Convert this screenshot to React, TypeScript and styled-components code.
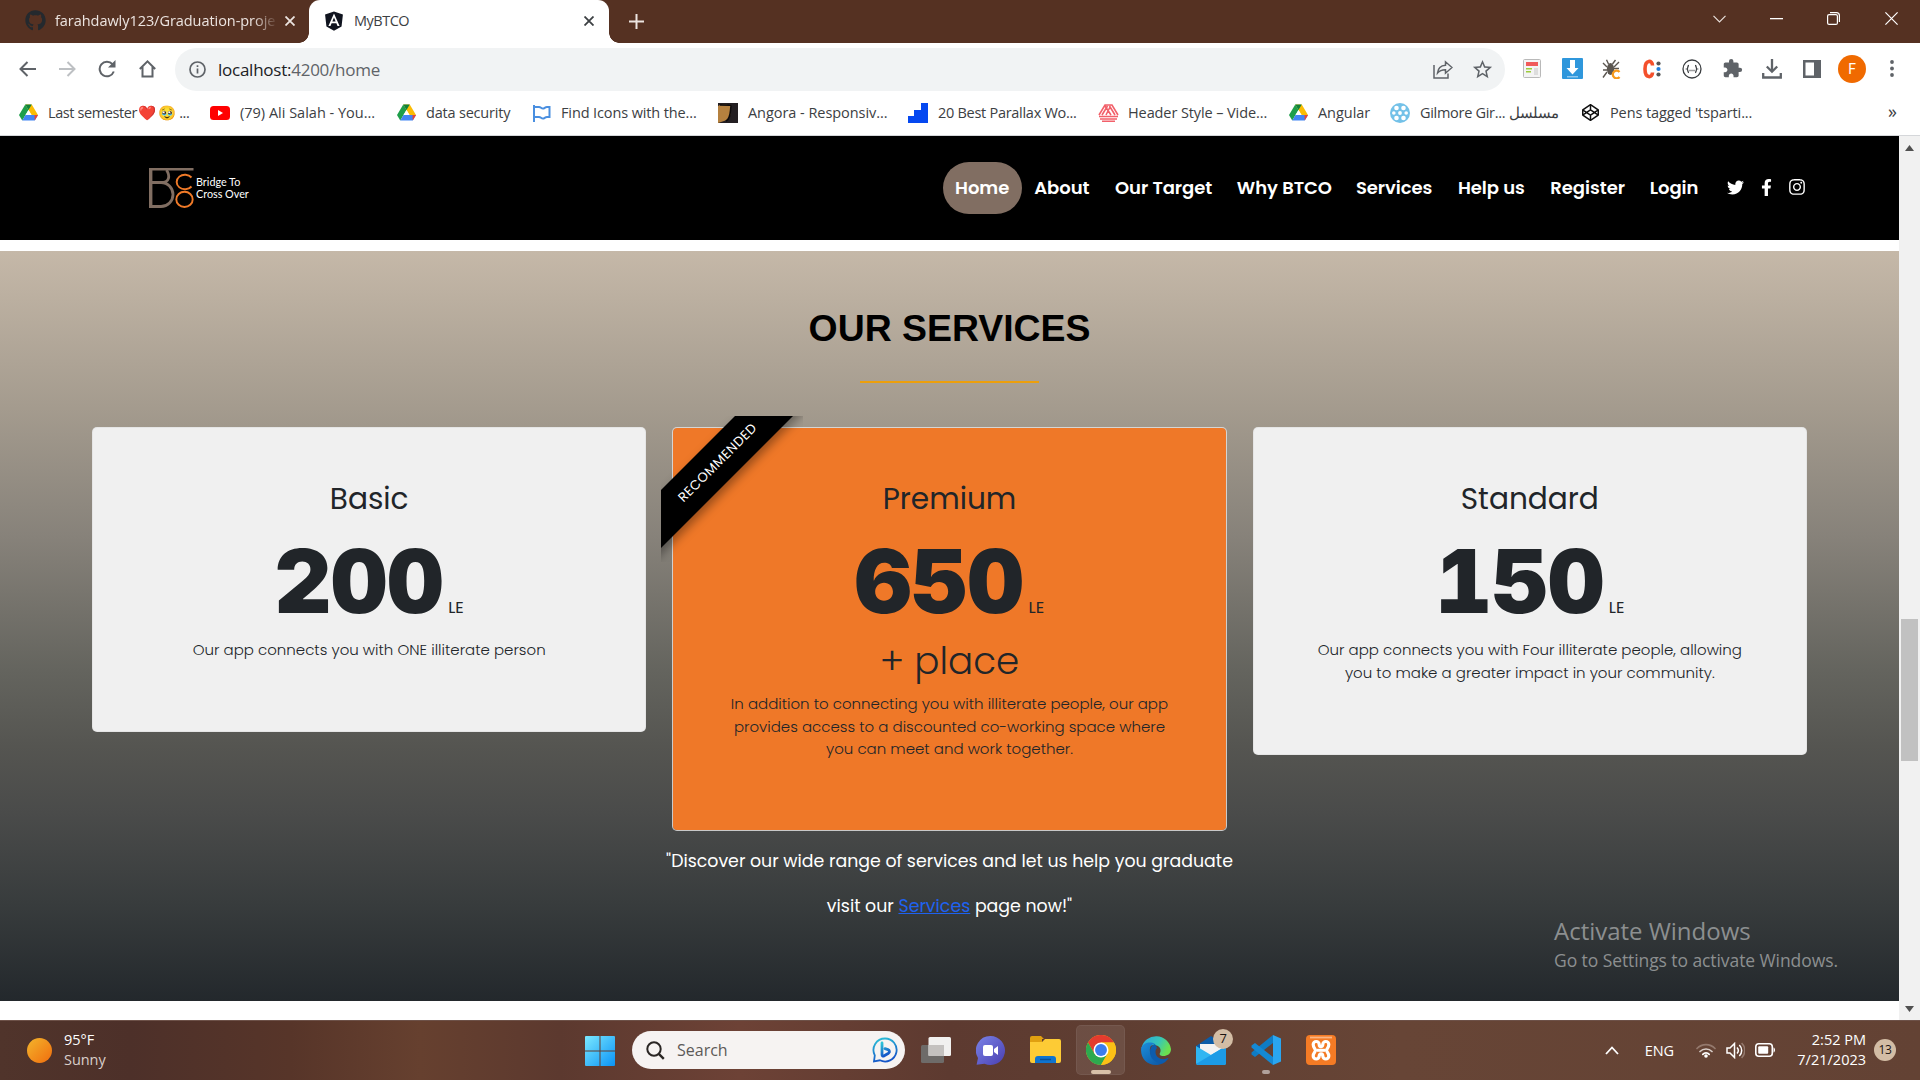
import React from 'react';
import styled, { createGlobalStyle, css } from 'styled-components';
import { FaGithub, FaAngular, FaTwitter, FaFacebookF, FaInstagram, FaCodepen } from 'react-icons/fa';
import { MdExtension, MdStarBorder } from 'react-icons/md';

const GlobalStyle = createGlobalStyle`
  *, *::before, *::after { box-sizing: border-box; }
  body { margin: 0; background: #fff; overflow: hidden; }
  svg { display: block; flex: none; }
`;

const uiFont = '"Segoe UI", "Open Sans", "Noto Sans", sans-serif';
const siteFont = 'Poppins, Inter, sans-serif';

const Screen = styled.div`
  width: 1920px;
  height: 1080px;
  display: flex;
  flex-direction: column;
  font-family: ${uiFont};
`;

/* ---------- Browser chrome ---------- */

const TabStrip = styled.header`
  height: 43px;
  display: flex;
  background: #553122;
`;

const cornerFlare = css`
  content: '';
  position: absolute;
  bottom: 0;
  width: 10px;
  height: 10px;
`;

const Tab = styled.div<{ $active?: boolean }>`
  position: relative;
  width: ${p => (p.$active ? 300 : 309)}px;
  padding: 0 ${p => (p.$active ? 15 : 14)}px 2px ${p => (p.$active ? 14 : 25)}px;
  display: flex;
  align-items: center;
  border-radius: 11px 11px 0 0;
  background: ${p => (p.$active ? '#fff' : 'transparent')};
  color: ${p => (p.$active ? '#3c4043' : '#ece4e0')};
  ${p =>
    p.$active &&
    css`
      &::before {
        ${cornerFlare}
        left: -10px;
        background: radial-gradient(circle at 0 0, transparent 9.5px, #fff 10px);
      }
      &::after {
        ${cornerFlare}
        right: -10px;
        background: radial-gradient(circle at 100% 0, transparent 9.5px, #fff 10px);
      }
    `}
`;

const TabTitle = styled.span<{ $fade?: boolean; $ls?: number }>`
  flex: 1;
  margin-left: 9px;
  font-size: 14.5px;
  line-height: 20px;
  white-space: nowrap;
  letter-spacing: ${p => p.$ls ?? 0}px;
  ${p => p.$fade && 'mask-image: linear-gradient(90deg, #000 86%, transparent 97%);'}
`;

const NewTab = styled.div`
  width: 54px;
  padding-bottom: 1px;
  display: flex;
  align-items: center;
  justify-content: center;
`;

const WindowControls = styled.div`
  margin-left: auto;
  height: 37px;
  display: flex;
  align-items: center;
`;

const WindowButton = styled.div<{ $w?: number }>`
  width: ${p => p.$w ?? 57}px;
  display: flex;
  justify-content: center;
`;

const Toolbar = styled.div`
  height: 53px;
  padding: 0 8px 0 7px;
  display: flex;
  align-items: center;
  background: #fff;
`;

const NavButton = styled.div`
  width: 40px;
  padding-bottom: 1px;
  display: flex;
  justify-content: center;
`;

const AddressBar = styled.div`
  flex: 1;
  height: 43px;
  margin: 0 7px 0 8px;
  padding: 0 11px 0 14px;
  display: flex;
  align-items: center;
  border-radius: 22px;
  background: #f1f3f4;
`;

const Url = styled.span`
  flex: 1;
  margin-left: 12px;
  font-size: 17px;
  line-height: 24px;
  letter-spacing: -0.25px;
  color: #5f6368;
  b { font-weight: 400; color: #202124; }
`;

const AddressActions = styled.div`
  display: flex;
  gap: 18px;
`;

const ExtensionButton = styled.div`
  width: 40px;
  padding-bottom: 2px;
  display: flex;
  justify-content: center;
`;

const Avatar = styled.div`
  width: 28px;
  height: 28px;
  border-radius: 50%;
  background: #f06a00;
  color: #fff;
  font: 14px/28px Roboto, sans-serif;
  text-align: center;
`;

const BookmarksBar = styled.nav`
  height: 40px;
  padding: 0 23px 6px 18px;
  display: flex;
  align-items: center;
  background: #fff;
  border-bottom: 1px solid #d5d7da;
`;

const Bookmark = styled.div<{ $w: number; $ls: number }>`
  width: ${p => p.$w}px;
  display: flex;
  align-items: center;
  gap: 10px;
  font-size: 14.5px;
  line-height: 20px;
  letter-spacing: ${p => p.$ls}px;
  white-space: nowrap;
  color: #3c4043;
`;

const BookmarkIcon = styled.span`
  width: 20px;
  display: flex;
  justify-content: center;
`;

const Emoji = styled.span`
  margin-left: 1px;
  font-size: 14.5px;
  line-height: 0;
  letter-spacing: 2.5px;
  font-family: "Noto Color Emoji", sans-serif;
`;

const Overflow = styled.span`
  margin-left: auto;
  padding-bottom: 3px;
  font-size: 18px;
  color: #3c4043;
`;

/* ---------- Page ---------- */

const Viewport = styled.div`
  height: 884px;
  display: flex;
  background: #fff;
`;

const Page = styled.main`
  position: relative;
  width: 1899px;
  font-family: ${siteFont};
`;

const SiteHeader = styled.header`
  height: 104px;
  padding: 0 93px 0 149px;
  display: flex;
  align-items: center;
  background: #000;
`;

const Brand = styled.div`
  display: flex;
  align-items: center;
  gap: 2px;
  padding-bottom: 1px;
  font: 10.8px/11.5px Lato, sans-serif;
  color: #fff;
`;

const Menu = styled.nav`
  margin-left: auto;
  display: flex;
`;

const MenuLink = styled.a<{ $w: number; $active?: boolean }>`
  width: ${p => p.$w}px;
  height: 52px;
  padding: 0 1px 1px 0;
  display: flex;
  align-items: center;
  justify-content: center;
  border-radius: 26px;
  background: ${p => (p.$active ? '#816e62' : 'transparent')};
  color: #fff;
  font-size: 18px;
  font-weight: 600;
  letter-spacing: -0.05px;
  white-space: nowrap;
`;

const Socials = styled.div`
  margin-left: 15px;
  display: flex;
  gap: 12.7px;
  color: #fff;
`;

const SocialIcon = styled.span`
  width: 18px;
  padding-bottom: 2px;
  display: flex;
  align-items: center;
  justify-content: center;
`;

const Services = styled.section`
  height: 750px;
  margin-top: 11px;
  padding: 55px 92px 0;
  display: flex;
  flex-direction: column;
  align-items: center;
  background: linear-gradient(
    180deg,
    #c5b8a8 0%, #a49b8e 21%, #87827a 38%, #64645e 56%,
    #555551 66%, #4a4b4a 75%, #383c3d 87%, #23282c 100%
  );
`;

const SectionTitle = styled.h2`
  margin: 0;
  font: 700 37.4px/44px Arial, "Liberation Sans", sans-serif;
  color: #000;
`;

const Rule = styled.div`
  width: 179px;
  height: 2px;
  margin: 31px 0 44px;
  background: #ec9f0c;
`;

const Plans = styled.div`
  width: 100%;
  display: grid;
  grid-template-columns: repeat(3, 1fr);
  align-items: start;
  gap: 26px;
`;

const Card = styled.article<{ $featured?: boolean }>`
  position: relative;
  padding: 51px 30px 69.5px;
  border: 1px solid rgba(223, 223, 223, ${p => (p.$featured ? 0.85 : 0.7)});
  border-radius: 5px;
  background: ${p => (p.$featured ? '#ef7828' : '#f0f0f0')};
  background-clip: ${p => (p.$featured ? 'padding-box' : 'border-box')};
  color: #212529;
  text-align: center;
`;

const PlanName = styled.h3`
  margin: 0 0 18px;
  font-size: 29.6px;
  font-weight: 400;
  line-height: 40px;
`;

const PriceRow = styled.div`
  height: 88px;
  display: flex;
  align-items: baseline;
  justify-content: center;
  gap: 5px;
`;

const Price = styled.strong`
  font-family: "Arial Black", Inter, sans-serif;
  font-size: 88px;
  font-weight: 860;
  line-height: 88px;
  letter-spacing: -0.5px;
  font-feature-settings: "tnum";
`;

const Currency = styled.span`
  font-size: 16.5px;
  line-height: 24px;
`;

const Extra = styled.div`
  margin: 12px 0 -6px;
  font-size: 37.3px;
  font-weight: 300;
  line-height: 48px;
`;

const Description = styled.p`
  margin: 14px 0 0;
  font-size: 15px;
  font-weight: 300;
  line-height: 22.5px;
  white-space: nowrap;
`;

const RibbonClip = styled.div`
  position: absolute;
  top: -12px;
  left: -12px;
  width: 142px;
  height: 146px;
  overflow: hidden;
`;

const Ribbon = styled.span`
  position: absolute;
  top: 26px;
  left: -56px;
  width: 225px;
  height: 41px;
  transform: rotate(-45deg);
  background: #000;
  box-shadow: 0 5px 10px rgba(0, 0, 0, 0.35);
  color: #fff;
  font-size: 13.2px;
  line-height: 41px;
  letter-spacing: 0.5px;
`;

const Tagline = styled.p`
  position: relative;
  z-index: 1;
  margin: 8px 0 0;
  text-align: center;
  color: #fff;
  font-size: 17.37px;
  line-height: 44.5px;
  a { color: #1f62f0; text-decoration: underline; text-decoration-thickness: 1px; }
`;

const Watermark = styled.div`
  position: absolute;
  left: 1554px;
  top: 778px;
  font-family: ${uiFont};
  font-size: 17.5px;
  line-height: 24px;
  letter-spacing: -0.08px;
  color: #8c8f90;
`;

const WatermarkTitle = styled.div`
  font-size: 24px;
  line-height: 34px;
  letter-spacing: -0.02px;
`;

const Scrollbar = styled.div`
  width: 21px;
  padding: 9px 0 8px;
  display: flex;
  flex-direction: column;
  align-items: center;
  background: #f1f1f1;
`;

const Thumb = styled.div`
  width: 17px;
  height: 142px;
  margin: 468px 0 auto;
  background: #c1c1c1;
`;

/* ---------- Taskbar ---------- */

const Taskbar = styled.footer`
  position: relative;
  height: 60px;
  display: flex;
  align-items: center;
  border-top: 1px solid #6d5148;
  background: linear-gradient(
    90deg,
    #50342b 0, #4d3029 130px, #573529 290px, #66402f 420px, #5c392f 560px,
    #6d4236 740px, #5d3a30 950px, #5f3e32 1120px, #674536 1400px, #634234 1920px
  );
`;

const Weather = styled.div`
  width: 585px;
  padding: 0 0 1px 27px;
  display: flex;
  align-items: center;
  gap: 12px;
  font-size: 14.5px;
  line-height: 20px;
  letter-spacing: -0.05px;
  color: #fff;
  span { color: #d9cfca; }
`;

const Sun = styled.div`
  width: 25px;
  height: 25px;
  border-radius: 50%;
  background: linear-gradient(135deg, #f3b52c, #f06d0e);
`;

const SearchBox = styled.div`
  width: 273px;
  height: 38px;
  margin: 0 6px 1px 17px;
  padding: 0 7px 0 14px;
  display: flex;
  align-items: center;
  border-radius: 19px;
  background: #f6f3f2;
  color: #5d5a58;
  font-size: 16px;
  span { flex: 1; margin-left: 12px; }
`;

const AppSlot = styled.div<{ $active?: boolean }>`
  position: relative;
  width: 49px;
  height: 50px;
  margin: 0 6px 1px 0;
  display: flex;
  align-items: center;
  justify-content: center;
  border-radius: 5px;
  ${p => p.$active && 'background: rgba(255,255,255,.09); box-shadow: inset 0 0 0 1px rgba(255,255,255,.06);'}
`;

const RunMark = styled.i<{ $wide?: boolean }>`
  position: absolute;
  bottom: 1px;
  left: 50%;
  width: ${p => (p.$wide ? 20 : 8)}px;
  height: 4px;
  margin-left: ${p => (p.$wide ? -10 : -4)}px;
  border-radius: 2px;
  background: ${p => (p.$wide ? '#d8c0a8' : '#b1a19b')};
`;

const CountBadge = styled.span<{ $over?: boolean }>`
  width: ${p => (p.$over ? 20 : 22)}px;
  height: ${p => (p.$over ? 20 : 22)}px;
  border-radius: 50%;
  background: #d3bda5;
  color: #1c1512;
  font-size: ${p => (p.$over ? 13 : 12)}px;
  line-height: ${p => (p.$over ? 19 : 21)}px;
  letter-spacing: -0.3px;
  text-align: center;
  ${p => p.$over && 'position: absolute; top: 4px; right: 2px;'}
`;

const Tray = styled.div`
  margin-left: auto;
  padding: 0 24px 1px 0;
  display: flex;
  align-items: center;
  color: #fff;
`;

const Language = styled.span`
  margin: 0 22px 0 26px;
  font-size: 14.5px;
  letter-spacing: -0.1px;
`;

const Status = styled.div`
  display: flex;
  align-items: center;
  gap: 10px;
`;

const Clock = styled.div`
  width: 90px;
  margin-right: 8px;
  padding-bottom: 1px;
  font-size: 14.5px;
  line-height: 20px;
  text-align: right;
`;

/* ---------- Drawings ---------- */

const Drive = () => (
  <svg width="19" height="17" viewBox="0 0 38 34">
    <path d="M12.5 1h13L38 22H25z" fill="#fbbc04" />
    <path d="M12.500 1 0 22l6.500 11L19 12z" fill="#1e9e4a" />
    <path d="M13 22h25l-6.500 11H6.500z" fill="#4285f4" />
    <path d="M12.500 1h13L19 12z" fill="#128039" />
    <path d="M31 22h7l-6.500 11z" fill="#ea4335" />
    <path d="M19 12 13 22h12z" fill="#fff" />
  </svg>
);
const YouTube = () => (
  <svg width="20" height="14" viewBox="0 0 20 14"><rect width="20" height="14" rx="3.500" fill="#f00" /><path d="M8 4v6l5-3z" fill="#fff" /></svg>
);
const Flag = () => (
  <svg width="19" height="18" viewBox="0 0 19 18" fill="none" stroke="#4a8fe0" strokeWidth="2">
    <path d="M2 18V1M2 3h5c2 0 2 1.500 4 1.500 1.500 0 2-1.500 4-1.500h2.500v10H15c-2 0-2.500 1.500-4 1.500-2 0-2-1.500-4-1.500H2" />
  </svg>
);
const Angora = () => (
  <svg width="20" height="20" viewBox="0 0 20 20"><path fill="#231f22" d="M0 0h20v20H0z" /><path d="M0 3c5-2 10-1 13 0 0 4 0 7-1 10-1 4-4 4-6 5l-6 2z" fill="#b5813f" /><path d="M2 2c8 0 11 0 11 1-1 6 0 12-5 15" fill="none" stroke="#0c0a0b" strokeWidth="1.500" /></svg>
);
const Stairs = () => (
  <svg width="20" height="20" viewBox="0 0 20 20"><path d="M13 0h7v20H0v-7h6V7h7z" fill="#0548f0" /></svg>
);
const TriangleMark = () => (
  <svg width="21" height="18" viewBox="0 0 21 18" fill="none" stroke="#f2606a" strokeWidth="1.600">
    <path d="M1 11 7 1h7l6 10M4 11l5.500-9M8 11l4-8M7 2l6 9M11.500 2l5.500 9M1 12.500h19M2 15h17M4 17.200h13" />
  </svg>
);
const Reel = () => (
  <svg width="20" height="20" viewBox="0 0 20 20"><circle cx="10" cy="10" r="10" fill="#73c1e8" /><g fill="#fff"><circle cx="6.500" cy="5" r="2.300" /><circle cx="13.500" cy="5" r="2.300" /><circle cx="6.500" cy="15" r="2.300" /><circle cx="13.500" cy="15" r="2.300" /><circle cx="3.800" cy="10" r="1.800" /><circle cx="16.200" cy="10" r="1.800" /><circle cx="10" cy="10" r="1.900" /></g></svg>
);
const Close = ({ c }: { c: string }) => (
  <svg width="10" height="10" viewBox="0 0 10 10" stroke={c} strokeWidth="1.800"><path d="M.5.5l9 9M9.500.5l-9 9" /></svg>
);
const Arrow = ({ c, flip }: { c: string; flip?: boolean }) => (
  <svg width="17" height="16" viewBox="0 0 17 16" fill="none" stroke={c} strokeWidth="2">
    <path d={flip ? 'M0 8h15M8.500 1l7 7-7 7' : 'M17 8H2M8.500 1l-7 7 7 7'} />
  </svg>
);

const bookmarks: { icon: React.ReactNode; text: React.ReactNode; w: number; ls: number }[] = [
  { icon: <Drive />, text: <>Last semester<Emoji>❤️🥹</Emoji>...</>, w: 192, ls: -0.4 },
  { icon: <YouTube />, text: '(79) Ali Salah - You...', w: 186, ls: 0 },
  { icon: <Drive />, text: 'data security', w: 135, ls: -0.2 },
  { icon: <Flag />, text: 'Find Icons with the...', w: 187, ls: -0.12 },
  { icon: <Angora />, text: 'Angora - Responsiv...', w: 190, ls: -0.05 },
  { icon: <Stairs />, text: '20 Best Parallax Wo...', w: 190, ls: -0.28 },
  { icon: <TriangleMark />, text: 'Header Style – Vide...', w: 190, ls: -0.1 },
  { icon: <Drive />, text: 'Angular', w: 102, ls: -0.05 },
  { icon: <Reel />, text: <>Gilmore Gir... مسلسل</>, w: 190, ls: -0.3 },
  { icon: <FaCodepen size={17} color="#111" />, text: "Pens tagged 'tsparti...", w: 180, ls: -0.1 },
];

const extensions: React.ReactNode[] = [
  <svg width="18" height="19" viewBox="0 0 18 19"><rect x=".5" y=".5" width="17" height="18" rx="1" fill="#f4f4f4" stroke="#b9b9b9" /><path fill="#f05a5a" d="M3 3h12v4H3z" /><path fill="#9ccc3c" d="M3 9h6v1.600H3zM3 12h5v1.600H3z" /><path fill="#ddd" d="M11 9h4v7h-4z" /></svg>,
  <svg width="21" height="21" viewBox="0 0 21 21"><rect width="21" height="21" rx="1" fill="#2f97dc" /><path fill="#fff" d="M8 2h5v8h3.500l-6 6.500-6-6.500H8z" /><path fill="#8fc9f0" d="M5 18h11v1.500H5z" /></svg>,
  <svg width="20" height="20" viewBox="0 0 20 20" fill="none"><ellipse cx="8.500" cy="10" rx="3.600" ry="6" fill="#5b5650" /><path d="M6.500 5 4.500.8M10.500 5l3-4M5 8 1 4M12 8l5-5M5 11H1M5 13l-4 5.500M12 9.500h5" stroke="#5b5650" strokeWidth="1.400" /><path d="M17.500 13a3.800 3.800 0 1 0 0 5" stroke="#f79a1c" strokeWidth="2.300" /></svg>,
  <svg width="18" height="20" viewBox="0 0 18 20" fill="none"><path d="M9.500 6.500C9.500 1 2 0 2 10s7.500 9 7.500 3.500" stroke="#f4502c" strokeWidth="3.600" /><circle cx="15.500" cy="4.500" r="2.100" fill="#555" /><circle cx="15.500" cy="10" r="2.100" fill="#1f7fe0" /><circle cx="15.500" cy="15.500" r="2.100" fill="#555" /></svg>,
  <svg width="20" height="20" viewBox="0 0 20 20" fill="none" stroke="#3a3d40" strokeWidth="1.300"><circle cx="10" cy="10" r="9" /><path d="M7 6.500c-2 0-.5 3-2 3.500 1.500.5 0 3.500 2 3.500M13 6.500c2 0 .5 3 2 3.500-1.500.5 0 3.500-2 3.500" /><path d="M7.500 11.500h5" strokeDasharray="1 1" /></svg>,
  <MdExtension size={21} color="#5f6368" />,
  <svg width="20" height="20" viewBox="0 0 20 20" fill="none" stroke="#5f6368" strokeWidth="2.300"><path d="M10 0v12M4.800 7.500 10 12.700l5.200-5.200M1.200 14v4.500h17.600V14" /></svg>,
  <svg width="18" height="18" viewBox="0 0 18 18"><path fill="#5f6368" fillRule="evenodd" d="M0 0h18v18H0zM2.500 2.500v13h8.500v-13z" /></svg>,
];

const Chat = () => (
  <svg width="29" height="29" viewBox="0 0 29 29"><defs><linearGradient id="ch" x1="0" y1="0" x2="1" y2="1"><stop stopColor="#7a83e8" /><stop offset="1" stopColor="#4a3fb0" /></linearGradient></defs><path d="M14.500 0a14.500 14.500 0 1 1-6 27.700L.6 28.800 2 22A14.500 14.500 0 0 1 14.500 0z" fill="url(#ch)" /><rect x="7" y="9" width="10" height="11" rx="2" fill="#fff" /><path d="m18 13 4-3v9l-4-3z" fill="#fff" /></svg>
);
const Folder = () => (
  <svg width="31" height="28" viewBox="0 0 31 28"><path d="M0 2a2 2 0 0 1 2-2h9l3 3h-2v7H0z" fill="#e0a010" /><path d="M0 6h12l3-3h14a2 2 0 0 1 2 2v20a2 2 0 0 1-2 2H2a2 2 0 0 1-2-2z" fill="#fdcb35" /><path d="M5 27v-4a3 3 0 0 1 3-3h15a3 3 0 0 1 3 3v4z" fill="#0f74cf" /><path d="M10 23.500h11" stroke="#0a4f96" strokeWidth="1.500" /></svg>
);
const Chrome = () => (
  <svg width="30" height="30" viewBox="0 0 48 48"><circle cx="24" cy="24" r="24" fill="#fbc116" /><path d="M24 12h20.800A24 24 0 0 0 3.200 12L13.600 30z" fill="#e33b2e" /><path d="M3.200 12 13.600 30 24 36 24 48A24 24 0 0 1 3.200 12z" fill="#2da94f" /><path d="m34.400 30-10.400 18L18 34z" fill="#2da94f" /><path d="M34.400 30 24 48A24 24 0 0 0 44.800 12H24z" fill="#fbc116" /><circle cx="24" cy="24" r="12" fill="#fff" /><circle cx="24" cy="24" r="9.500" fill="#3b7ded" /></svg>
);
const Edge = () => (
  <svg width="30" height="30" viewBox="0 0 30 30"><defs><linearGradient id="e1" x1="0" y1="0" x2="1" y2=".4"><stop stopColor="#2aa5e0" /><stop offset=".6" stopColor="#37c6b8" /><stop offset="1" stopColor="#6be04f" /></linearGradient><linearGradient id="e2" x1="0" y1="0" x2="1" y2="1"><stop stopColor="#1b8fdc" /><stop offset="1" stopColor="#0c4f9c" /></linearGradient></defs><path d="M.5 13A15 15 0 0 1 30 14c0 5-4 7-7.500 7-3.500 0-4.500-1.500-3.500-3 2-4-1-8-6-8-6 0-11 4-12.500 3z" fill="url(#e1)" /><path d="M.2 13C2 8 9 6 14 9c-5 0-5.500 5-5 8 1 6 7 9 12 8 3-.5 5-2 6.500-2C24 28 20 30 15 30 5 30-1 22 .2 13z" fill="url(#e2)" /><path d="M14 9c-3 1-5 4-5 8 0 8 8 13 15 10l3.500-4c-6 3-13 0-13-6 0-2 .5-3 1.500-4z" fill="#0d5cad" /></svg>
);
const Mail = () => (
  <svg width="30" height="29" viewBox="0 0 30 29"><path d="M0 10 15 0l15 10v6H0z" fill="#0b5ca8" /><path d="M4 8h22v12H4z" fill="#f2f2f2" /><path d="M0 10l15 9 15-9v17a2 2 0 0 1-2 2H2a2 2 0 0 1-2-2z" fill="#30b6f2" /><path d="M0 28 30 10v17a2 2 0 0 1-2 2H2z" fill="#1c9be6" /></svg>
);
const Code = () => (
  <svg width="30" height="30" viewBox="0 0 30 30"><path d="m22 0 8 3.500v23L22 30z" fill="#2aa6f0" /><path d="M22 0v8L4 22l-3.500-2.500v-2z" fill="#0f7cc4" /><path d="M22 30v-8L4 8 .5 10.500v2z" fill="#1489d4" /></svg>
);
const Xampp = () => (
  <svg width="30" height="30" viewBox="0 0 30 30">
    <rect width="30" height="30" rx="4" fill="#f47b25" />
    <path d="M4 2.500h22" stroke="#f9b585" strokeWidth="1.800" />
    <path d="M7.200 9.500a3 3 0 0 1 6 0c0 3.500 3.600 2 3.600 0a3 3 0 0 1 6 0c0 3.500-2.300 4-2.300 5.800s2.300 2.300 2.300 5.700a3 3 0 0 1-6 0c0-2.500-3.600-3-3.600 0a3 3 0 0 1-6 0c0-3.400 2.300-3.900 2.300-5.700s-2.300-2.300-2.300-5.800z" fill="none" stroke="#fff" strokeWidth="3.200" strokeLinejoin="round" />
    <path d="M11 15.300h8" stroke="#fff" strokeWidth="3" />
  </svg>
);
const TaskView = () => (
  <svg width="30" height="27" viewBox="0 0 30 27"><rect y="8" width="23" height="18" rx="1.500" fill="#6e6b69" /><rect x="7.500" width="22.500" height="19" rx="1.500" fill="#f1f0ef" /><path d="M7.500 8H23v11H7.500z" fill="#c4c1bf" /></svg>
);

const menu: [string, number][] = [
  ['Home', 79], ['About', 80.5], ['Our Target', 123], ['Why BTCO', 118.5],
  ['Services', 101], ['Help us', 93.5], ['Register', 99], ['Login', 74],
];

export default function App() {
  return (
    <Screen>
      <GlobalStyle />
      <TabStrip>
        <Tab>
          <FaGithub size={21} color="#24292e" />
          <TabTitle $fade $ls={-0.05}>farahdawly123/Graduation-proje</TabTitle>
          <Close c="#ece4e0" />
        </Tab>
        <Tab $active>
          <FaAngular size={22} color="#10141f" />
          <TabTitle $ls={-0.5}>MyBTCO</TabTitle>
          <Close c="#3c4043" />
        </Tab>
        <NewTab>
          <svg width="15" height="15" viewBox="0 0 15 15" stroke="#ece4e0" strokeWidth="2"><path d="M7.500 0v15M0 7.500h15" /></svg>
        </NewTab>
        <WindowControls>
          <WindowButton>
            <svg width="13" height="8" viewBox="0 0 13 8" fill="none" stroke="#e8dfdb" strokeWidth="1.200"><path d="m.5.800 6 6 6-6" /></svg>
          </WindowButton>
          <WindowButton>
            <svg width="13" height="2" viewBox="0 0 13 2"><path fill="#fff" d="M0 0h13v1.300H0z" /></svg>
          </WindowButton>
          <WindowButton>
            <svg width="13" height="13" viewBox="0 0 13 13" fill="none" stroke="#fff" strokeWidth="1.200"><rect x=".6" y="2.600" width="9.800" height="9.800" rx="1.500" /><path d="M3 .6h6.400a3 3 0 0 1 3 3V10" /></svg>
          </WindowButton>
          <WindowButton $w={58}>
            <svg width="13" height="13" viewBox="0 0 13 13" stroke="#fff" strokeWidth="1.200"><path d="m.4.400 12.200 12.200M12.600.400.400 12.600" /></svg>
          </WindowButton>
        </WindowControls>
      </TabStrip>

      <Toolbar>
        <NavButton><Arrow c="#5f6368" /></NavButton>
        <NavButton><Arrow c="#bdc0c3" flip /></NavButton>
        <NavButton>
          <svg width="18" height="18" viewBox="0 0 18 18" fill="none" stroke="#5f6368" strokeWidth="2"><path d="M15.800 11.500A7.300 7.300 0 1 1 14.500 4.200L16 6" /><path d="M17.500 0v7.500H10z" fill="#5f6368" stroke="none" /></svg>
        </NavButton>
        <NavButton>
          <svg width="17" height="18" viewBox="0 0 17 18" fill="none" stroke="#5f6368" strokeWidth="2"><path d="M.8 9 8.500 1.400 16.200 9M3.500 7v9.500h10V7" /></svg>
        </NavButton>
        <AddressBar>
          <svg width="17" height="17" viewBox="0 0 17 17" fill="none" stroke="#5f6368" strokeWidth="1.700"><circle cx="8.500" cy="8.500" r="7.500" /><path d="M8.500 7.600v5M8.500 4.300v1.800" /></svg>
          <Url><b>localhost:</b>4200/home</Url>
          <AddressActions>
            <svg width="20" height="22" viewBox="0 0 20 22" fill="none" stroke="#5f6368" strokeWidth="1.500"><path d="M1 7v13h14v-4.500" /><path d="M4.500 15c.5-5 3.500-7.500 8-7.800V3.800l6.500 5.700-6.500 5.700v-3.500c-3.500 0-6 .8-8 3.300z" /></svg>
            <MdStarBorder size={23} color="#5f6368" />
          </AddressActions>
        </AddressBar>
        {extensions.map((icon, i) => <ExtensionButton key={i}>{icon}</ExtensionButton>)}
        <ExtensionButton><Avatar>F</Avatar></ExtensionButton>
        <ExtensionButton>
          <svg width="4" height="17" viewBox="0 0 4 17" fill="#5f6368"><circle cx="2" cy="2" r="1.900" /><circle cx="2" cy="8.500" r="1.900" /><circle cx="2" cy="15" r="1.900" /></svg>
        </ExtensionButton>
      </Toolbar>

      <BookmarksBar>
        {bookmarks.map((b, i) => (
          <Bookmark key={i} $w={b.w} $ls={b.ls}>
            <BookmarkIcon>{b.icon}</BookmarkIcon>
            <span>{b.text}</span>
          </Bookmark>
        ))}
        <Overflow>»</Overflow>
      </BookmarksBar>

      <Viewport>
        <Page>
          <SiteHeader>
            <Brand>
              <svg width="45" height="40" viewBox="0 0 45 40" fill="none">
                <g stroke="#816e62">
                  <path d="M1.700 0v40" strokeWidth="3.400" />
                  <path d="M0 1.300h44.500" strokeWidth="2.600" />
                  <path d="M2 38.500h10a11.800 11.800 0 0 0 0-24H2M12 14.500c9 0 9-7 5.500-12.500" strokeWidth="2.800" />
                </g>
                <g stroke="#f07a28" strokeWidth="1.900">
                  <path d="M42.500 9.500a8.300 7.300 0 1 0 0 9" />
                  <ellipse cx="35.500" cy="31.400" rx="8.200" ry="7.600" />
                </g>
              </svg>
              <span>Bridge To<br />Cross Over</span>
            </Brand>
            <Menu>
              {menu.map(([label, w], i) => (
                <MenuLink key={label} $w={w} $active={i === 0}>{label}</MenuLink>
              ))}
            </Menu>
            <Socials>
              <SocialIcon><FaTwitter size={17} /></SocialIcon>
              <SocialIcon><FaFacebookF size={17} /></SocialIcon>
              <SocialIcon><FaInstagram size={18} /></SocialIcon>
            </Socials>
          </SiteHeader>

          <Services>
            <SectionTitle>OUR SERVICES</SectionTitle>
            <Rule />
            <Plans>
              <Card>
                <PlanName>Basic</PlanName>
                <PriceRow><Price>200</Price><Currency>LE</Currency></PriceRow>
                <Description>Our app connects you with ONE illiterate person</Description>
              </Card>
              <Card $featured>
                <RibbonClip><Ribbon>RECOMMENDED</Ribbon></RibbonClip>
                <PlanName>Premium</PlanName>
                <PriceRow><Price>650</Price><Currency>LE</Currency></PriceRow>
                <Extra>+ place</Extra>
                <Description>
                  In addition to connecting you with illiterate people, our app<br />
                  provides access to a discounted co-working space where<br />
                  you can meet and work together.
                </Description>
              </Card>
              <Card>
                <PlanName>Standard</PlanName>
                <PriceRow><Price>150</Price><Currency>LE</Currency></PriceRow>
                <Description>
                  Our app connects you with Four illiterate people, allowing<br />
                  you to make a greater impact in your community.
                </Description>
              </Card>
            </Plans>
            <Tagline>
              "Discover our wide range of services and let us help you graduate<br />
              visit our <a>Services</a> page now!"
            </Tagline>
          </Services>

          <Watermark>
            <WatermarkTitle>Activate Windows</WatermarkTitle>
            Go to Settings to activate Windows.
          </Watermark>
        </Page>
        <Scrollbar>
          <svg width="9" height="6" viewBox="0 0 9 6" fill="#505050"><path d="M4.500 0 9 6H0z" /></svg>
          <Thumb />
          <svg width="9" height="6" viewBox="0 0 9 6" fill="#505050"><path d="M0 0h9L4.500 6z" /></svg>
        </Scrollbar>
      </Viewport>

      <Taskbar>
        <Weather>
          <Sun />
          <div>95°F<br /><span>Sunny</span></div>
        </Weather>
        <svg width="30" height="30" viewBox="0 0 30 30">
          <defs><linearGradient id="win" x1="0" y1="0" x2="1" y2="1"><stop stopColor="#7be8ff" /><stop offset="1" stopColor="#0a93f5" /></linearGradient></defs>
          <path fill="url(#win)" d="M1 0h13.500v14.500H0V1a1 1 0 0 1 1-1zM15.500 0H29a1 1 0 0 1 1 1v13.500H15.500zM0 15.500h14.500V30H1a1 1 0 0 1-1-1zM15.500 15.500H30V29a1 1 0 0 1-1 1H15.500z" />
        </svg>
        <SearchBox>
          <svg width="19" height="19" viewBox="0 0 19 19" fill="none" stroke="#2a2624" strokeWidth="2"><circle cx="8" cy="8" r="6.700" /><path d="m12.800 12.800 5 5" strokeWidth="2.400" /></svg>
          <span>Search</span>
          <svg width="26" height="26" viewBox="0 0 26 26" fill="none">
            <defs><linearGradient id="bg" x1="0" y1="0" x2=".3" y2="1"><stop stopColor="#2cc4d8" /><stop offset="1" stopColor="#1556c8" /></linearGradient></defs>
            <path d="M13 1.500a11.500 11.500 0 1 1-5 21.800l-6 1 .8-6A11.500 11.500 0 0 1 13 1.500z" stroke="url(#bg)" strokeWidth="1.800" />
            <path d="M10 6v11.500c0 1.500 1 2 2.200 1.300l4.300-2.600c1.600-1.200 1-3-.5-3.600l-3-1" stroke="url(#bg)" strokeWidth="2.800" strokeLinejoin="round" strokeLinecap="round" />
          </svg>
        </SearchBox>
        <AppSlot><TaskView /></AppSlot>
        <AppSlot><Chat /></AppSlot>
        <AppSlot><Folder /></AppSlot>
        <AppSlot $active><Chrome /><RunMark $wide /></AppSlot>
        <AppSlot><Edge /></AppSlot>
        <AppSlot><Mail /><CountBadge $over>7</CountBadge></AppSlot>
        <AppSlot><Code /><RunMark /></AppSlot>
        <AppSlot><Xampp /></AppSlot>
        <Tray>
          <svg width="14" height="9" viewBox="0 0 14 9" fill="none" stroke="#fff" strokeWidth="1.800"><path d="m1 8 6-6.500L13 8" /></svg>
          <Language>ENG</Language>
          <Status>
            <svg width="20" height="16" viewBox="0 0 20 16" fill="none" strokeWidth="1.700" strokeLinecap="round"><path d="M1 6.500a12.500 12.500 0 0 1 18 0" stroke="#94796d" /><path d="M4 9.500a8.500 8.500 0 0 1 12 0" stroke="#d9cec9" /><path d="M6.800 12.300a4.500 4.500 0 0 1 6.400 0" stroke="#fff" /><circle cx="10" cy="14" r="1.800" fill="#fff" /></svg>
            <svg width="19" height="17" viewBox="0 0 19 17" fill="none" stroke="#fff" strokeWidth="1.500"><path d="M1 6h3l4.500-4.500v14L4 11H1zM11 5.500a4.500 4.500 0 0 1 0 6M13.300 3a7.500 7.500 0 0 1 0 11" /><path d="M15.600 1a10.500 10.500 0 0 1 0 15" stroke="#94796d" /></svg>
            <svg width="21" height="14" viewBox="0 0 21 14"><rect x=".8" y=".8" width="16.500" height="12.400" rx="3" fill="none" stroke="#fff" strokeWidth="1.600" /><rect x="3.200" y="3.200" width="10" height="7.600" rx="1" fill="#fff" /><path d="M18.500 4.500c2 .5 2 4.500 0 5z" fill="#fff" /></svg>
          </Status>
          <Clock>2:52 PM<br />7/21/2023</Clock>
          <CountBadge>13</CountBadge>
        </Tray>
      </Taskbar>
    </Screen>
  );
}
